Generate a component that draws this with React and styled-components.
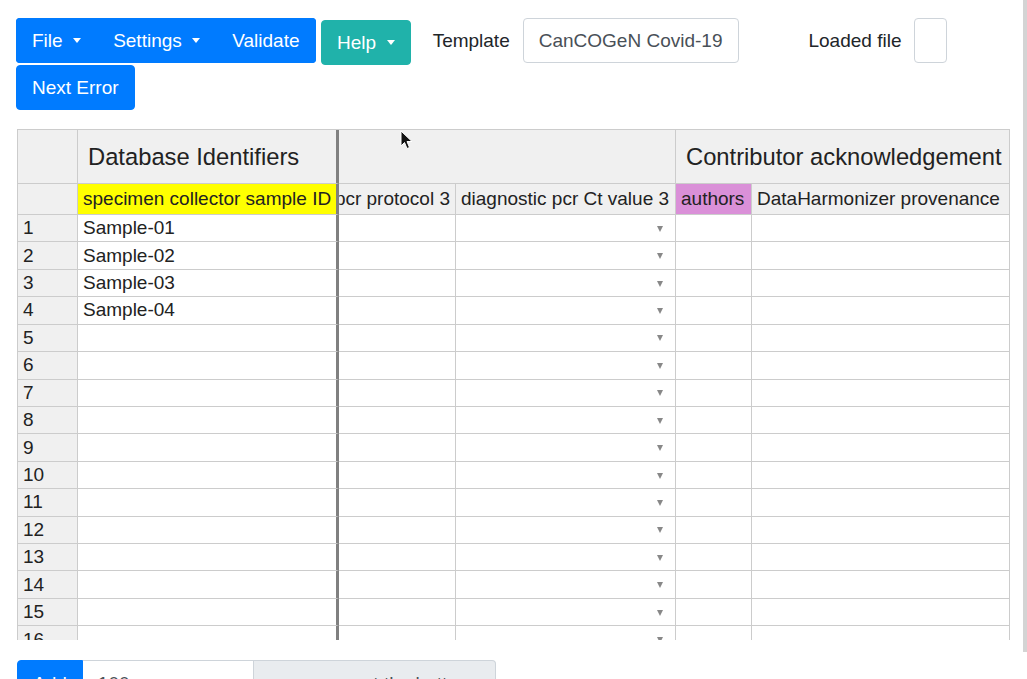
import React from 'react';
import styled, { createGlobalStyle } from 'styled-components';

const GlobalStyle = createGlobalStyle`
  html, body {
    margin: 0;
    padding: 0;
    overflow: hidden;
    background: #fff;
  }
  body {
    font-family: "Liberation Sans", Arial, sans-serif;
    font-size: 19px;
    color: #212529;
  }
`;

const Page = styled.div`
  position: relative;
  padding: 18px 17px 0 16px;
  width: 1027px;
  height: 679px;
  box-sizing: border-box;
`;

const Toolbar = styled.div`
  display: flex;
  flex-wrap: wrap;
  align-items: flex-start;
`;

const BtnGroup = styled.div`
  display: flex;
  border-radius: 4px;
  overflow: hidden;
`;

const Button = styled.button`
  font-family: inherit;
  font-size: 19px;
  line-height: 28px;
  padding: 7.5px 15px;
  border: 1px solid ${(p) => p.$bg || '#007bff'};
  background: ${(p) => p.$bg || '#007bff'};
  color: #fff;
  border-radius: ${(p) => (p.$grouped ? '0' : '4px')};
  display: inline-flex;
  align-items: center;
  margin: ${(p) => p.$margin || '0'};
  cursor: pointer;
`;

const Caret = styled.span`
  display: inline-block;
  margin-left: 10.5px;
  border-top: 5px solid #fff;
  border-left: 4.5px solid transparent;
  border-right: 4.5px solid transparent;
`;

const Label = styled.label`
  line-height: 45px;
  margin: 0 13px 0 ${(p) => p.$gap}px;
  color: #212529;
`;

const Field = styled.div`
  height: 45px;
  box-sizing: border-box;
  min-width: 32px;
  border: 1px solid #ced4da;
  border-radius: 4px;
  padding: 0 16px 0 15px;
  color: #495057;
  display: flex;
  align-items: center;
  white-space: nowrap;
`;

const Grid = styled.div`
  display: grid;
  grid-template-columns: 60px 261px 117px 220px 76px 258px;
  grid-template-rows: 54px 31px repeat(18, 27.43px);
  width: 993px;
  height: 511px;
  box-sizing: border-box;
  margin: 19px 0 0 1px;
  border-left: 1px solid #ccc;
  border-top: 1px solid #ccc;
  overflow: hidden;
  color: #222;
`;

const Cell = styled.div`
  box-sizing: border-box;
  grid-column: span ${(p) => p.$span || 1};
  border-right: ${(p) => (p.$frozen ? '3px solid #808080' : '1px solid #ccc')};
  border-bottom: 1px solid #ccc;
  background: ${(p) => p.$bg || '#fff'};
  display: flex;
  align-items: center;
  justify-content: ${(p) => (p.$end ? 'flex-end' : 'flex-start')};
  padding: 0 ${(p) => (p.$group ? '10px' : '5px')};
  font-size: ${(p) => (p.$group ? '23.75px' : '19px')};
  white-space: nowrap;
  overflow: hidden;
`;

const Arrow = styled.span`
  margin-left: auto;
  margin-right: 7px;
  margin-top: 1px;
  border-top: 6px solid #888;
  border-left: 3.5px solid transparent;
  border-right: 3.5px solid transparent;
`;

const BottomGroup = styled.div`
  display: flex;
  margin: 20px 0 0 1px;
  height: 47px;
`;

const AddButton = styled(Button)`
  border-radius: 4px 0 0 4px;
  padding: 8.5px 15px;
  align-items: flex-start;
`;

const CountInput = styled.div`
  width: 171px;
  box-sizing: border-box;
  border: 1px solid #ced4da;
  border-left: none;
  padding: 0 15px;
  line-height: 45px;
  color: #495057;
`;

const Addon = styled.div`
  width: 242px;
  box-sizing: border-box;
  border: 1px solid #ced4da;
  border-left: none;
  border-radius: 0 4px 4px 0;
  background: #e9ecef;
  padding: 0 15px;
  line-height: 45px;
  color: #495057;
  white-space: nowrap;
`;

const Pointer = styled.svg`
  position: absolute;
  left: 400px;
  top: 130px;
`;

const ScrollThumb = styled.div`
  position: fixed;
  top: 0;
  left: 1023px;
  width: 4px;
  height: 652px;
  background: #d4d4d4;
`;

const HEADER = '#f0f0f0';
const samples = ['Sample-01', 'Sample-02', 'Sample-03', 'Sample-04'];
const rows = Array.from({ length: 18 }, (_, i) => i + 1);

export default function App() {
  return (
    <Page>
      <GlobalStyle />
      <Toolbar>
        <BtnGroup>
          <Button $grouped>File<Caret /></Button>
          <Button $grouped>Settings<Caret /></Button>
          <Button $grouped>Validate</Button>
        </BtnGroup>
        <Button $bg="#20b2aa" $margin="2px 0 0 5.5px">Help<Caret /></Button>
        <Label $gap={22}>Template</Label>
        <Field>CanCOGeN Covid-19</Field>
        <Label $gap={69}>Loaded file</Label>
        <Field />
        <Button>Next Error</Button>
      </Toolbar>

      <Grid>
        <Cell $bg={HEADER} />
        <Cell $bg={HEADER} $frozen $group>Database Identifiers</Cell>
        <Cell $bg={HEADER} $span={2} />
        <Cell $bg={HEADER} $span={2} $group>Contributor acknowledgement</Cell>

        <Cell $bg={HEADER} />
        <Cell $bg="#ffff00" $frozen>specimen collector sample ID</Cell>
        <Cell $bg={HEADER} $end>diagnostic pcr protocol 3</Cell>
        <Cell $bg={HEADER}>diagnostic pcr Ct value 3</Cell>
        <Cell $bg="#da90d8">authors</Cell>
        <Cell $bg={HEADER}>DataHarmonizer provenance</Cell>

        {rows.map((n) => (
          <React.Fragment key={n}>
            <Cell $bg={HEADER}>{n}</Cell>
            <Cell $frozen>{samples[n - 1] || ''}</Cell>
            <Cell />
            <Cell><Arrow /></Cell>
            <Cell />
            <Cell />
          </React.Fragment>
        ))}
      </Grid>

      <BottomGroup>
        <AddButton>Add</AddButton>
        <CountInput>100</CountInput>
        <Addon>more rows at the bottom</Addon>
      </BottomGroup>

      <Pointer width="13" height="20" viewBox="0 0 13 20">
        <path d="M1 1 L1 16 L4.5 12.5 L7 18.5 L9.5 17.5 L7 11.5 L12 11.5 Z" fill="#111" stroke="#fff" strokeWidth="1" />
      </Pointer>
      <ScrollThumb />
    </Page>
  );
}
